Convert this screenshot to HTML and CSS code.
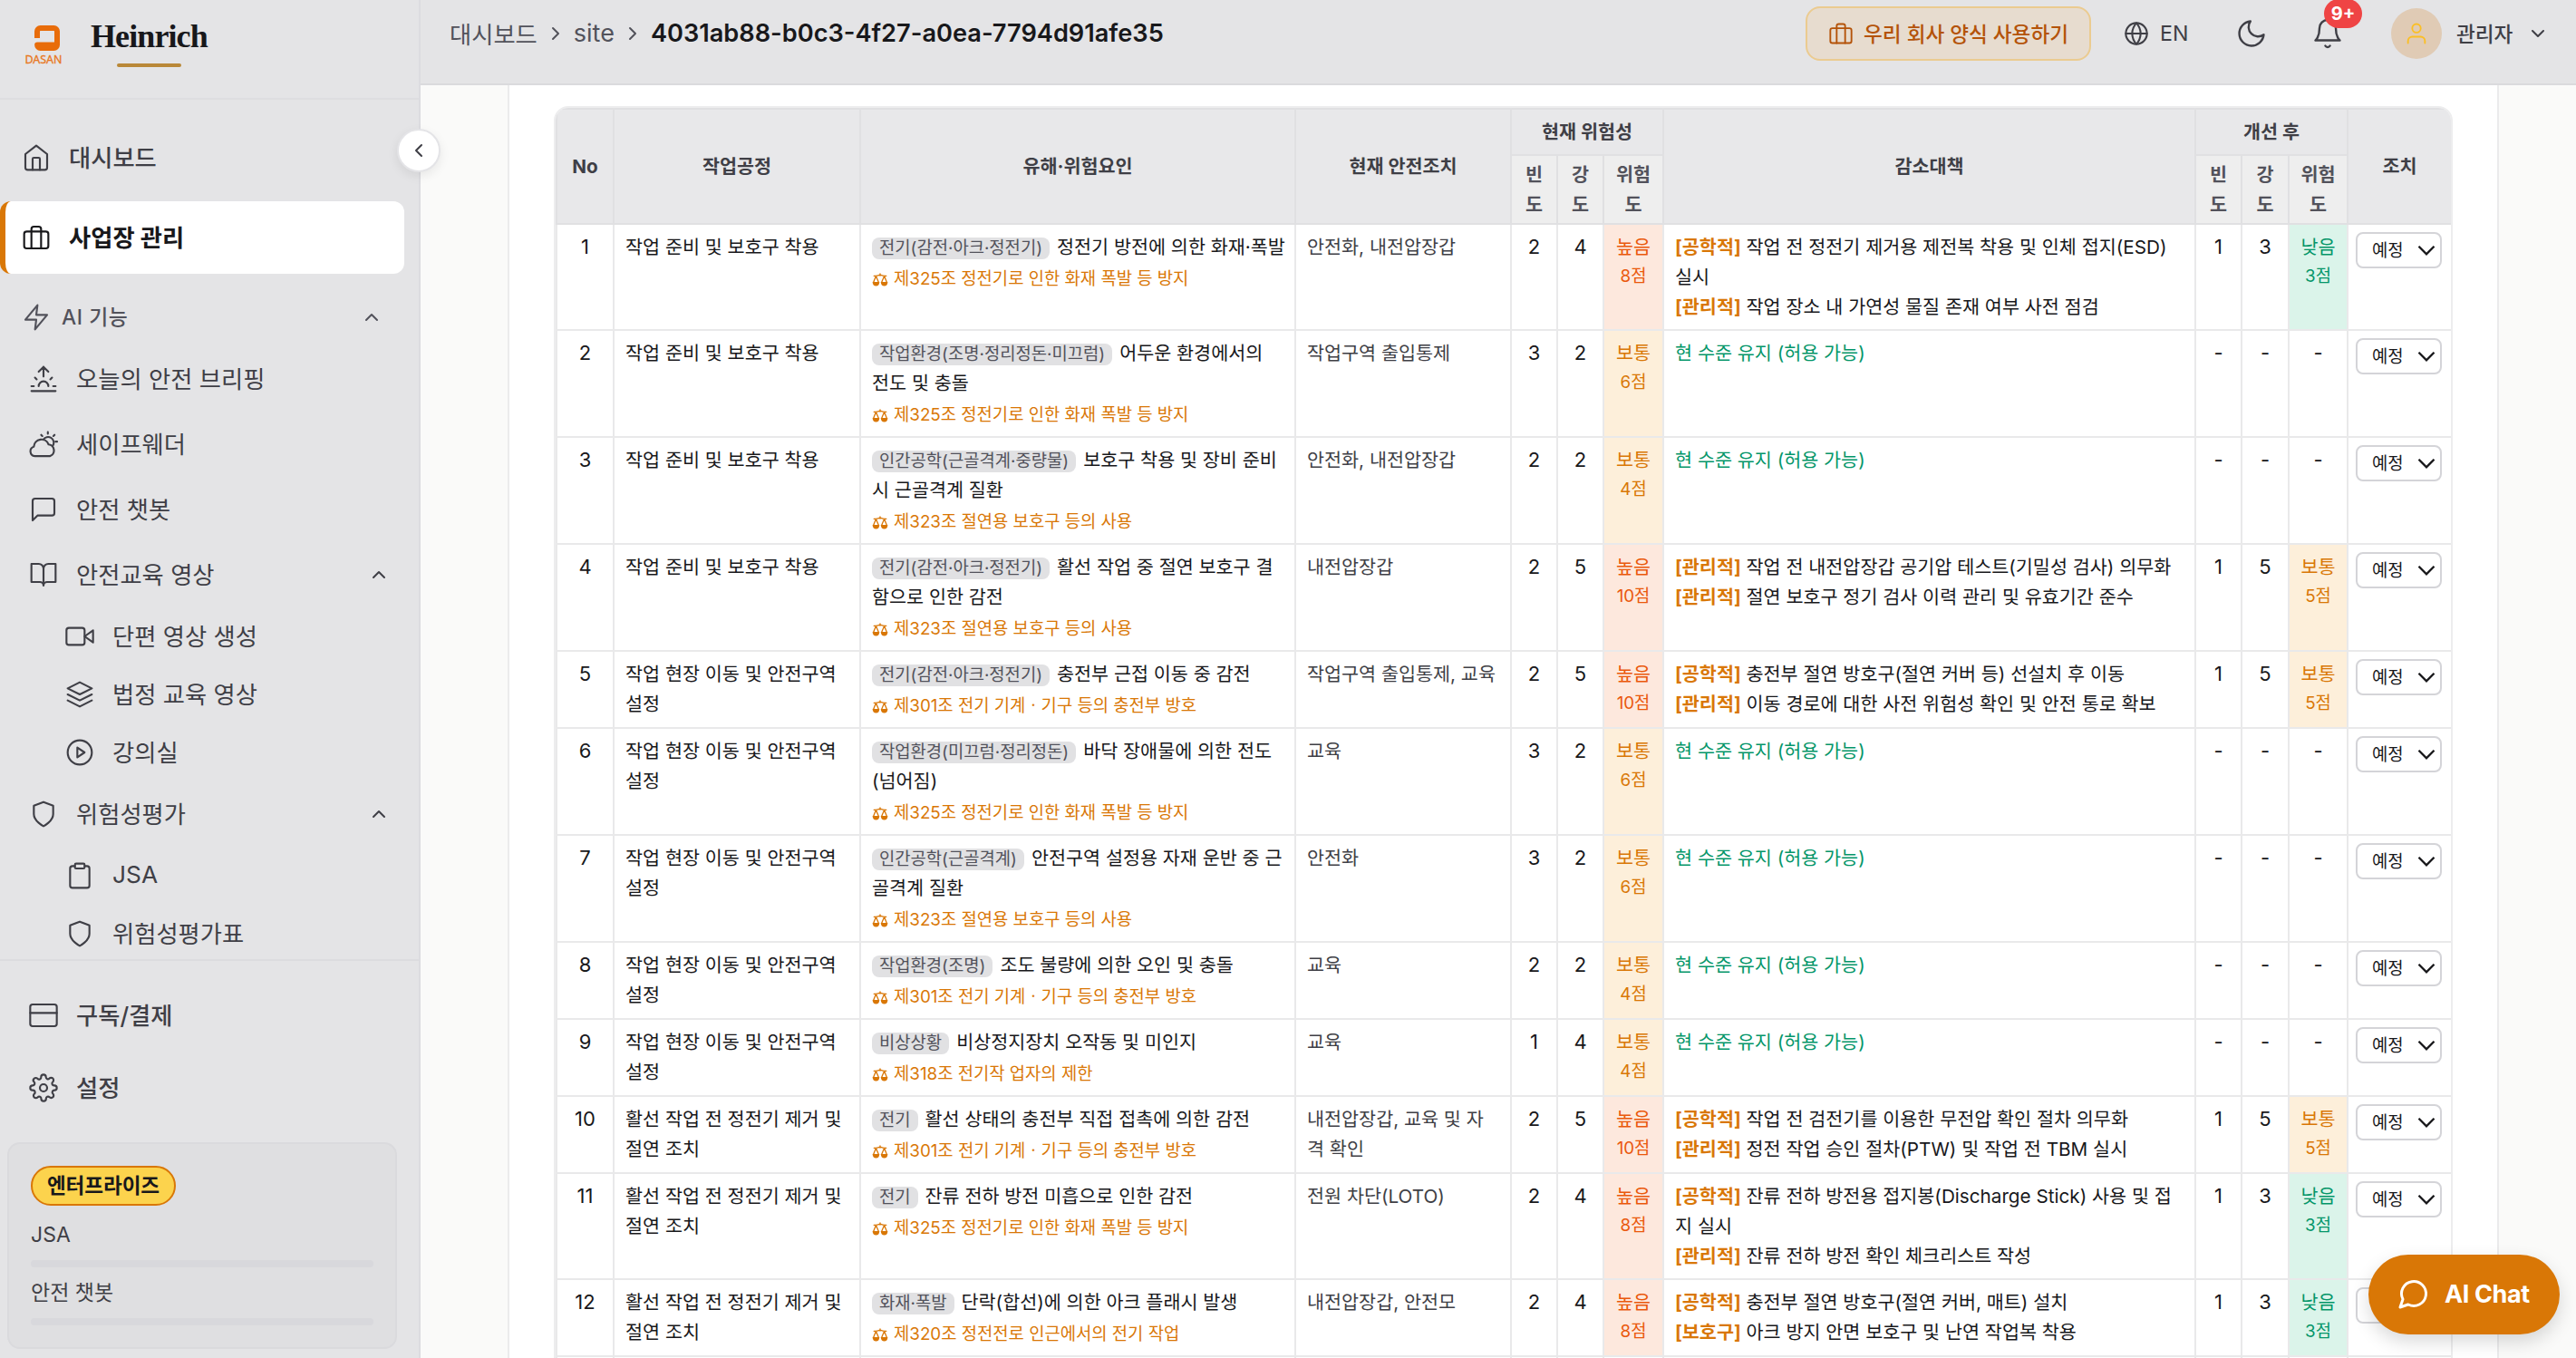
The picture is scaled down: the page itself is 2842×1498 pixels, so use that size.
FILE: index.html
```html
<!DOCTYPE html>
<html lang="ko">
<head>
<meta charset="utf-8">
<title>Heinrich</title>
<link rel="stylesheet" href="styles.css">
</head>
<body>
<svg class="sprite" aria-hidden="true">
  <symbol id="home" viewBox="0 0 24 24"><path d="M3 9l9-7 9 7v11a2 2 0 0 1-2 2H5a2 2 0 0 1-2-2z"/><path d="M9 22V13a1 1 0 0 1 1-1h4a1 1 0 0 1 1 1v9"/></symbol>
  <symbol id="case" viewBox="0 0 24 24"><rect x="2" y="7" width="20" height="14" rx="2"/><path d="M16 21V5a2 2 0 0 0-2-2h-4a2 2 0 0 0-2 2v16"/></symbol>
  <symbol id="zap" viewBox="0 0 24 24"><path d="M13 2L3 14h9l-1 8 10-12h-9l1-8z"/></symbol>
  <symbol id="up" viewBox="0 0 24 24"><path d="M18 15l-6-6-6 6"/></symbol>
  <symbol id="down" viewBox="0 0 24 24"><path d="M6 9l6 6 6-6"/></symbol>
  <symbol id="left" viewBox="0 0 24 24"><path d="M15 18l-6-6 6-6"/></symbol>
  <symbol id="right" viewBox="0 0 24 24"><path d="M9 18l6-6-6-6"/></symbol>
  <symbol id="sunrise" viewBox="0 0 24 24"><path d="M12 2v8M4.93 10.93l1.41 1.41M2 18h2M20 18h2M19.07 10.93l-1.41 1.41M22 22H2M8 6l4-4 4 4M16 18a4 4 0 0 0-8 0"/></symbol>
  <symbol id="cloud" viewBox="0 0 24 24"><path d="M15.600 2v1.300M10.100 4.300l.9.900M21.100 4.300l-.9.900M22 9.800h1.300M11.800 8.300a4.600 4.600 0 0 1 8 4.800M4.800 21.800a4 4 0 0 1-.8-7.800A6.300 6.300 0 0 1 16.200 12.200a5 5 0 0 1 1.300 9.600z"/></symbol>
  <symbol id="msg" viewBox="0 0 24 24"><path d="M21 15a2 2 0 0 1-2 2H7l-4 4V5a2 2 0 0 1 2-2h14a2 2 0 0 1 2 2z"/></symbol>
  <symbol id="book" viewBox="0 0 24 24"><path d="M2 3h6a4 4 0 0 1 4 4v14a3 3 0 0 0-3-3H2zM22 3h-6a4 4 0 0 0-4 4v14a3 3 0 0 1 3-3h7z"/></symbol>
  <symbol id="video" viewBox="0 0 24 24"><path d="M23 7l-7 5 7 5V7z"/><rect x="1" y="5" width="15" height="14" rx="2"/></symbol>
  <symbol id="layers" viewBox="0 0 24 24"><path d="M12 2L2 7l10 5 10-5-10-5zM2 17l10 5 10-5M2 12l10 5 10-5"/></symbol>
  <symbol id="play" viewBox="0 0 24 24"><circle cx="12" cy="12" r="10"/><path d="M10 8l6 4-6 4V8z"/></symbol>
  <symbol id="shield" viewBox="0 0 24 24"><path d="M12 22s8-4 8-10V5l-8-3-8 3v7c0 6 8 10 8 10z"/></symbol>
  <symbol id="clip" viewBox="0 0 24 24"><path d="M16 4h2a2 2 0 0 1 2 2v14a2 2 0 0 1-2 2H6a2 2 0 0 1-2-2V6a2 2 0 0 1 2-2h2"/><rect x="8" y="2" width="8" height="4" rx="1"/></symbol>
  <symbol id="card" viewBox="0 0 24 24"><rect x="1" y="3" width="22" height="18" rx="2"/><path d="M1 10h22"/></symbol>
  <symbol id="gear" viewBox="0 0 24 24"><circle cx="12" cy="12" r="3"/><path d="M19.400 15a1.650 1.650 0 0 0 .33 1.820l.06.06a2 2 0 1 1-2.830 2.830l-.06-.06a1.650 1.650 0 0 0-2.800 1.170V21a2 2 0 0 1-4 0v-.09a1.650 1.650 0 0 0-2.900-1.150l-.06.06a2 2 0 1 1-2.830-2.830l.06-.06A1.650 1.650 0 0 0 3.090 14H3a2 2 0 0 1 0-4h.09a1.650 1.650 0 0 0 1.170-2.800l-.06-.06a2 2 0 1 1 2.830-2.830l.06.06A1.650 1.650 0 0 0 10 3.090V3a2 2 0 0 1 4 0v.09a1.650 1.650 0 0 0 2.820 1.170l.06-.06a2 2 0 1 1 2.830 2.830l-.06.06A1.650 1.650 0 0 0 20.910 10H21a2 2 0 0 1 0 4h-.09a1.650 1.650 0 0 0-1.510 1z"/></symbol>
  <symbol id="globe" viewBox="0 0 24 24"><circle cx="12" cy="12" r="10"/><path d="M2 12h20M12 2a15.300 15.300 0 0 1 4 10 15.300 15.300 0 0 1-4 10 15.300 15.300 0 0 1-4-10 15.300 15.300 0 0 1 4-10z"/></symbol>
  <symbol id="moon" viewBox="0 0 24 24"><path d="M21 12.790A9 9 0 1 1 11.210 3 7 7 0 0 0 21 12.790z"/></symbol>
  <symbol id="bell" viewBox="0 0 24 24"><path d="M18 8A6 6 0 0 0 6 8c0 7-3 9-3 9h18s-3-2-3-9M13.730 21a2 2 0 0 1-3.460 0"/></symbol>
  <symbol id="user" viewBox="0 0 24 24"><path d="M20 21v-2a4 4 0 0 0-4-4H8a4 4 0 0 0-4 4v2"/><circle cx="12" cy="7" r="4"/></symbol>
  <symbol id="chat" viewBox="0 0 24 24"><path d="M7.900 20A9 9 0 1 0 4 16.100L2 22Z"/></symbol>
  <symbol id="law" viewBox="0 0 18 16"><path d="M2.200 3.300Q4.500 3.800 9 2.200Q13.500 3.800 15.800 3.300M9 1v2M4.400 3.500L1.600 10.500M4.400 3.500L7.400 10.500M13.600 3.500L10.600 10.500M13.600 3.500L16.400 10.500" fill="none" stroke="currentColor" stroke-width="1.300"/><path d="M.6 10h7.700q-.3 4.500-3.800 4.500T.6 10zM9.700 10h7.700q-.3 4.500-3.800 4.500T9.700 10z" fill="currentColor" stroke="none"/></symbol>
</svg>
<div class="app">
  <aside class="sidebar">
    <div class="brand">
      <div class="logo">
        <svg class="logo-mark" viewBox="0 0 28 28"><path d="M3 14V6.500a3.500 3.500 0 0 1 3.500-3.500h15A3.500 3.500 0 0 1 25 6.500v15a3.500 3.500 0 0 1-3.500 3.500h-15A3.500 3.500 0 0 1 3.100 21.500H22" fill="none" stroke="#e86c0a" stroke-width="6"/></svg>
        <span>DASAN</span>
      </div>
      <div class="name"><b>Heinrich</b><i></i></div>
    </div>
    <nav class="nav">
      <a class="item top"><svg><use href="#home"/></svg>대시보드</a>
      <a class="item top active"><svg><use href="#case"/></svg>사업장 관리</a>
      <a class="item group"><svg><use href="#zap"/></svg>AI 기능<svg class="chev"><use href="#up"/></svg></a>
      <a class="item"><svg><use href="#sunrise"/></svg>오늘의 안전 브리핑</a>
      <a class="item"><svg><use href="#cloud"/></svg>세이프웨더</a>
      <a class="item"><svg><use href="#msg"/></svg>안전 챗봇</a>
      <a class="item"><svg><use href="#book"/></svg>안전교육 영상<svg class="chev"><use href="#up"/></svg></a>
      <a class="item sub"><svg><use href="#video"/></svg>단편 영상 생성</a>
      <a class="item sub"><svg><use href="#layers"/></svg>법정 교육 영상</a>
      <a class="item sub"><svg><use href="#play"/></svg>강의실</a>
      <a class="item"><svg><use href="#shield"/></svg>위험성평가<svg class="chev"><use href="#up"/></svg></a>
      <a class="item sub"><svg><use href="#clip"/></svg>JSA</a>
      <a class="item sub"><svg><use href="#shield"/></svg>위험성평가표</a>
    </nav>
    <div class="foot">
      <a class="item"><svg><use href="#card"/></svg>구독/결제</a>
      <a class="item"><svg><use href="#gear"/></svg>설정</a>
      <div class="plan">
        <span class="plan-badge">엔터프라이즈</span>
        <span class="plan-label">JSA</span><i class="bar"></i>
        <span class="plan-label">안전 챗봇</span><i class="bar"></i>
      </div>
    </div>
    <button class="collapse"><svg><use href="#left"/></svg></button>
  </aside>
  <main class="main">
    <header class="topbar">
      <div class="crumbs"><span>대시보드</span><svg><use href="#right"/></svg><span class="latin">site</span><svg><use href="#right"/></svg><b>4031ab88-b0c3-4f27-a0ea-7794d91afe35</b></div>
      <div class="tools">
        <button class="form-btn"><svg><use href="#case"/></svg>우리 회사 양식 사용하기</button>
        <span class="lang"><svg><use href="#globe"/></svg>EN</span>
        <svg class="moon"><use href="#moon"/></svg>
        <span class="bell"><svg><use href="#bell"/></svg><em>9+</em></span>
        <span class="avatar"><svg><use href="#user"/></svg></span>
        <span class="who">관리자</span>
        <svg class="who-chev"><use href="#down"/></svg>
      </div>
    </header>
    <section class="sheet">
      <div class="table-wrap">
        <table>
          <colgroup><col class="c1"><col class="c2"><col class="c3"><col class="c4"><col class="c5"><col class="c6"><col class="c7"><col class="c8"><col class="c9"><col class="c10"><col class="c11"><col class="c12"></colgroup>
          <thead>
            <tr class="h1"><th rowspan="2">No</th><th rowspan="2">작업공정</th><th rowspan="2">유해·위험요인</th><th rowspan="2">현재 안전조치</th><th colspan="3">현재 위험성</th><th rowspan="2">감소대책</th><th colspan="3">개선 후</th><th rowspan="2">조치</th></tr>
            <tr class="h2"><th>빈도</th><th>강도</th><th>위험도</th><th>빈도</th><th>강도</th><th>위험도</th></tr>
          </thead>
          <tbody>
            <tr class="r3"><td class="n">1</td><td>작업 준비 및 보호구 착용</td><td><span class="tag">전기(감전·아크·정전기)</span>정전기 방전에 의한 화재·폭발<div class="law"><svg><use href="#law"/></svg>제325조 정전기로 인한 화재 폭발 등 방지</div></td><td class="safe">안전화, 내전압장갑</td><td class="n">2</td><td class="n">4</td><td class="risk high">높음<small>8점</small></td><td><b>[공학적]</b> 작업 전 정전기 제거용 제전복 착용 및 인체 접지(ESD)<br>실시<br><b>[관리적]</b> 작업 장소 내 가연성 물질 존재 여부 사전 점검</td><td class="n">1</td><td class="n">3</td><td class="risk low">낮음<small>3점</small></td><td class="act"><span class="select">예정<svg><use href="#down"/></svg></span></td></tr>
            <tr class="r4"><td class="n">2</td><td>작업 준비 및 보호구 착용</td><td><span class="tag">작업환경(조명·정리정돈·미끄럼)</span>어두운 환경에서의<br>전도 및 충돌<div class="law"><svg><use href="#law"/></svg>제325조 정전기로 인한 화재 폭발 등 방지</div></td><td class="safe">작업구역 출입통제</td><td class="n">3</td><td class="n">2</td><td class="risk mid">보통<small>6점</small></td><td class="keep">현 수준 유지 (허용 가능)</td><td class="n">-</td><td class="n">-</td><td class="n">-</td><td class="act"><span class="select">예정<svg><use href="#down"/></svg></span></td></tr>
            <tr class="r4"><td class="n">3</td><td>작업 준비 및 보호구 착용</td><td><span class="tag">인간공학(근골격계·중량물)</span>보호구 착용 및 장비 준비<br>시 근골격계 질환<div class="law"><svg><use href="#law"/></svg>제323조 절연용 보호구 등의 사용</div></td><td class="safe">안전화, 내전압장갑</td><td class="n">2</td><td class="n">2</td><td class="risk mid">보통<small>4점</small></td><td class="keep">현 수준 유지 (허용 가능)</td><td class="n">-</td><td class="n">-</td><td class="n">-</td><td class="act"><span class="select">예정<svg><use href="#down"/></svg></span></td></tr>
            <tr class="r4"><td class="n">4</td><td>작업 준비 및 보호구 착용</td><td><span class="tag">전기(감전·아크·정전기)</span>활선 작업 중 절연 보호구 결<br>함으로 인한 감전<div class="law"><svg><use href="#law"/></svg>제323조 절연용 보호구 등의 사용</div></td><td class="safe">내전압장갑</td><td class="n">2</td><td class="n">5</td><td class="risk high">높음<small>10점</small></td><td><b>[관리적]</b> 작업 전 내전압장갑 공기압 테스트(기밀성 검사) 의무화<br><b>[관리적]</b> 절연 보호구 정기 검사 이력 관리 및 유효기간 준수</td><td class="n">1</td><td class="n">5</td><td class="risk mid">보통<small>5점</small></td><td class="act"><span class="select">예정<svg><use href="#down"/></svg></span></td></tr>
            <tr class="r2"><td class="n">5</td><td>작업 현장 이동 및 안전구역<br>설정</td><td><span class="tag">전기(감전·아크·정전기)</span>충전부 근접 이동 중 감전<div class="law"><svg><use href="#law"/></svg>제301조 전기 기계ㆍ기구 등의 충전부 방호</div></td><td class="safe">작업구역 출입통제, 교육</td><td class="n">2</td><td class="n">5</td><td class="risk high">높음<small>10점</small></td><td><b>[공학적]</b> 충전부 절연 방호구(절연 커버 등) 선설치 후 이동<br><b>[관리적]</b> 이동 경로에 대한 사전 위험성 확인 및 안전 통로 확보</td><td class="n">1</td><td class="n">5</td><td class="risk mid">보통<small>5점</small></td><td class="act"><span class="select">예정<svg><use href="#down"/></svg></span></td></tr>
            <tr class="r4"><td class="n">6</td><td>작업 현장 이동 및 안전구역<br>설정</td><td><span class="tag">작업환경(미끄럼·정리정돈)</span>바닥 장애물에 의한 전도<br>(넘어짐)<div class="law"><svg><use href="#law"/></svg>제325조 정전기로 인한 화재 폭발 등 방지</div></td><td class="safe">교육</td><td class="n">3</td><td class="n">2</td><td class="risk mid">보통<small>6점</small></td><td class="keep">현 수준 유지 (허용 가능)</td><td class="n">-</td><td class="n">-</td><td class="n">-</td><td class="act"><span class="select">예정<svg><use href="#down"/></svg></span></td></tr>
            <tr class="r4"><td class="n">7</td><td>작업 현장 이동 및 안전구역<br>설정</td><td><span class="tag">인간공학(근골격계)</span>안전구역 설정용 자재 운반 중 근<br>골격계 질환<div class="law"><svg><use href="#law"/></svg>제323조 절연용 보호구 등의 사용</div></td><td class="safe">안전화</td><td class="n">3</td><td class="n">2</td><td class="risk mid">보통<small>6점</small></td><td class="keep">현 수준 유지 (허용 가능)</td><td class="n">-</td><td class="n">-</td><td class="n">-</td><td class="act"><span class="select">예정<svg><use href="#down"/></svg></span></td></tr>
            <tr class="r2"><td class="n">8</td><td>작업 현장 이동 및 안전구역<br>설정</td><td><span class="tag">작업환경(조명)</span>조도 불량에 의한 오인 및 충돌<div class="law"><svg><use href="#law"/></svg>제301조 전기 기계ㆍ기구 등의 충전부 방호</div></td><td class="safe">교육</td><td class="n">2</td><td class="n">2</td><td class="risk mid">보통<small>4점</small></td><td class="keep">현 수준 유지 (허용 가능)</td><td class="n">-</td><td class="n">-</td><td class="n">-</td><td class="act"><span class="select">예정<svg><use href="#down"/></svg></span></td></tr>
            <tr class="r2"><td class="n">9</td><td>작업 현장 이동 및 안전구역<br>설정</td><td><span class="tag">비상상황</span>비상정지장치 오작동 및 미인지<div class="law"><svg><use href="#law"/></svg>제318조 전기작 업자의 제한</div></td><td class="safe">교육</td><td class="n">1</td><td class="n">4</td><td class="risk mid">보통<small>4점</small></td><td class="keep">현 수준 유지 (허용 가능)</td><td class="n">-</td><td class="n">-</td><td class="n">-</td><td class="act"><span class="select">예정<svg><use href="#down"/></svg></span></td></tr>
            <tr class="r2"><td class="n">10</td><td>활선 작업 전 정전기 제거 및<br>절연 조치</td><td><span class="tag">전기</span>활선 상태의 충전부 직접 접촉에 의한 감전<div class="law"><svg><use href="#law"/></svg>제301조 전기 기계ㆍ기구 등의 충전부 방호</div></td><td class="safe">내전압장갑, 교육 및 자<br>격 확인</td><td class="n">2</td><td class="n">5</td><td class="risk high">높음<small>10점</small></td><td><b>[공학적]</b> 작업 전 검전기를 이용한 무전압 확인 절차 의무화<br><b>[관리적]</b> 정전 작업 승인 절차(PTW) 및 작업 전 TBM 실시</td><td class="n">1</td><td class="n">5</td><td class="risk mid">보통<small>5점</small></td><td class="act"><span class="select">예정<svg><use href="#down"/></svg></span></td></tr>
            <tr class="r3"><td class="n">11</td><td>활선 작업 전 정전기 제거 및<br>절연 조치</td><td><span class="tag">전기</span>잔류 전하 방전 미흡으로 인한 감전<div class="law"><svg><use href="#law"/></svg>제325조 정전기로 인한 화재 폭발 등 방지</div></td><td class="safe">전원 차단(LOTO)</td><td class="n">2</td><td class="n">4</td><td class="risk high">높음<small>8점</small></td><td><b>[공학적]</b> 잔류 전하 방전용 접지봉(Discharge Stick) 사용 및 접<br>지 실시<br><b>[관리적]</b> 잔류 전하 방전 확인 체크리스트 작성</td><td class="n">1</td><td class="n">3</td><td class="risk low">낮음<small>3점</small></td><td class="act"><span class="select">예정<svg><use href="#down"/></svg></span></td></tr>
            <tr class="r2"><td class="n">12</td><td>활선 작업 전 정전기 제거 및<br>절연 조치</td><td><span class="tag">화재·폭발</span>단락(합선)에 의한 아크 플래시 발생<div class="law"><svg><use href="#law"/></svg>제320조 정전전로 인근에서의 전기 작업</div></td><td class="safe">내전압장갑, 안전모</td><td class="n">2</td><td class="n">4</td><td class="risk high">높음<small>8점</small></td><td><b>[공학적]</b> 충전부 절연 방호구(절연 커버, 매트) 설치<br><b>[보호구]</b> 아크 방지 안면 보호구 및 난연 작업복 착용</td><td class="n">1</td><td class="n">3</td><td class="risk low">낮음<small>3점</small></td><td class="act"><span class="select">예정<svg><use href="#down"/></svg></span></td></tr>
            <tr class="r2"><td></td><td></td><td></td><td></td><td></td><td></td><td></td><td></td><td></td><td></td><td></td><td></td></tr>
          </tbody>
        </table>
      </div>
    </section>
  </main>
  <button class="fab"><svg><use href="#chat"/></svg>AI Chat</button>
</div>
</body>
</html>
```

FILE: styles.css
```css
* { box-sizing: border-box; }
html, body { margin: 0; height: 100%; overflow: hidden; }
body { font-family: Inter, "Noto Sans CJK KR", sans-serif; color: #18181b; background: #fafaf9; }
button { font: inherit; margin: 0; padding: 0; }
svg { fill: none; stroke: currentColor; stroke-width: 1.6; stroke-linecap: round; stroke-linejoin: round; flex: none; }
.sprite { position: absolute; width: 0; height: 0; }
.app { position: relative; display: flex; height: 1498px; overflow: hidden; }

/* Sidebar */
.sidebar { position: relative; z-index: 3; width: 464px; flex: none; display: flex; flex-direction: column; background: #e4e4e6; border-right: 2px solid #dcdce0; }
.brand { height: 110px; flex: none; display: flex; align-items: flex-start; border-bottom: 2px solid #dddde0; padding: 22px 0 0 28px; }
.logo { width: 40px; display: flex; flex-direction: column; align-items: center; color: #e87722; font: 12.5px/14px "Noto Sans", sans-serif; }
.logo span { margin-top: 3px; -webkit-text-stroke: .3px #e87722; }
.logo-mark { width: 28px; height: 28px; margin: 6px 0 0 8px; stroke-linecap: butt; }
.name { margin-left: 32px; display: flex; flex-direction: column; align-items: center; }
.name b { font: bold 36px/36px "Liberation Serif", serif; letter-spacing: -.9px; }
.name i { width: 71px; height: 4px; border-radius: 2px; background: #b98838; margin-top: 12px; }
.nav { flex: none; height: 948px; overflow: hidden; padding-top: 24px; }
.item { display: flex; align-items: center; height: 72px; padding: 0 0 3px 32px; gap: 20px; font-size: 26.3px; color: #3f3f46; white-space: nowrap; }
.item svg { width: 32px; height: 32px; margin-top: 3px; }
.item.top { height: 80px; padding-left: 24px; font-weight: 500; }
.item.active { width: 446px; margin: 8px 0 15px; padding-left: 18px; background: #fff; border-left: 6px solid #d97706; border-radius: 12px; color: #18181b; font-weight: 700; }
.item.group { height: 65px; padding-left: 24px; gap: 12px; font-size: 22.8px; font-weight: 500; color: #52525b; letter-spacing: .6px; }
.item .chev { width: 24px; height: 24px; margin-left: auto; margin-right: 32px; stroke-width: 2; }
.item.group .chev { margin-right: 40px; }
.item.sub { height: 64px; padding-left: 72px; }
.foot { flex: 1; border-top: 2px solid #dcdcdf; padding: 20px 0 0; }
.foot .item { height: 80px; font-weight: 500; }
.plan { width: 430px; height: 228px; margin: 20px 0 0 8px; padding: 24px; border: 2px solid #dadadd; border-radius: 14px; background: #dfdfe1; display: flex; flex-direction: column; }
.plan-badge { width: 160px; height: 44px; border: 2px solid #d97706; border-radius: 22px; background: #fcd34d; font-weight: 700; font-size: 22.6px; line-height: 39px; text-align: center; letter-spacing: -.1px; }
.plan-label { font-size: 23px; line-height: 32px; margin-top: 16px; color: #3f3f46; }
.bar { height: 8px; border-radius: 4px; background: #d8d8dc; margin-top: 12px; }
.bar + .plan-label { margin-top: 12px; }
.collapse { position: absolute; left: 438px; top: 142px; width: 48px; height: 48px; border-radius: 50%; border: 2px solid #e4e4e7; background: #fff; color: #3f3f46; box-shadow: 0 4px 12px rgba(0,0,0,.08); display: grid; place-items: center; }
.collapse svg { width: 24px; height: 24px; stroke-width: 2; }

/* Top bar */
.main { flex: 1; min-width: 0; }
.topbar { height: 94px; display: flex; justify-content: space-between; align-items: flex-start; background: #e4e4e6; border-bottom: 2px solid #dadadd; padding: 7px 31px 0 32px; }
.crumbs, .tools { display: flex; align-items: center; height: 60px; }
.crumbs { font-size: 26.3px; color: #52525b; padding-bottom: 2px; }
.crumbs svg { width: 24px; height: 24px; margin: 2px 8px 0; stroke-width: 2; }
.crumbs .latin { font-size: 27px; }
.crumbs b { font-size: 27.200px; font-weight: 600; color: #18181b; }
.tools { color: #3f3f46; margin-right: -1px; }
.form-btn { width: 315px; height: 60px; padding-bottom: 2px; border: 2px solid #ebcb90; border-radius: 16px; background: #e7dccf; color: #b45309; font-size: 22.6px; font-weight: 500; display: flex; align-items: center; justify-content: center; gap: 11px; white-space: nowrap; }
.form-btn svg { width: 28px; height: 28px; margin-top: 2px; }
.lang { display: flex; align-items: center; gap: 12px; margin-left: 36px; width: 108px; font-size: 23.2px; font-weight: 400; }
.lang svg { width: 28px; height: 28px; stroke-width: 1.8; }
.moon, .bell svg { width: 36px; height: 36px; display: block; }
.moon { margin-left: 15px; }
.bell { position: relative; margin-left: 48px; }
.bell em { position: absolute; left: 14px; top: -20px; width: 42px; height: 32px; border-radius: 16px; background: #ef4444; color: #fff; font: 700 20px/32px Inter, sans-serif; text-align: center; }
.avatar { width: 56px; height: 56px; border-radius: 50%; background: #e0cbb5; color: #fbbf24; display: grid; place-items: center; margin-left: 52px; }
.avatar svg { width: 28px; height: 28px; }
.who { margin: -2px 0 0 16px; width: 64px; font-size: 22.6px; font-weight: 500; white-space: nowrap; }
.who-chev { width: 24px; height: 24px; margin-left: 14px; stroke-width: 2; }

/* Sheet */
.sheet { margin: 0 85px 0 96px; height: 1404px; padding: 23px 49px 0; background: #fff; border: solid #ebebec; border-width: 0 2px; }
.table-wrap { height: 1500px; border: 2px solid #ededee; border-radius: 16px; overflow: hidden; }
table { width: 2091px; table-layout: fixed; border-collapse: collapse; font-size: 20.7px; line-height: 33px; }
.c1 { width: 63px; } .c2 { width: 272px; } .c3 { width: 480px; } .c4 { width: 238px; }
.c5, .c6, .c9 { width: 51px; } .c7 { width: 66px; } .c8 { width: 587px; }
.c10 { width: 52px; } .c11 { width: 65px; } .c12 { width: 115px; }
th, td { border: 2px solid #e9e9ea; padding: 8px 10px 6px 12px; }
th { background: #e8e8ea; border-color: #e0e0e2; color: #3f3f46; font-weight: 700; padding: 0 11px; }
.h1 { height: 51px; }
.h2 { height: 76px; }
.h2 th { background: #eeeeee; color: #52525b; font-weight: 600; }
td { vertical-align: top; text-align: left; white-space: nowrap; }
.r2 { height: 85px; } .r3 { height: 117px; } .r4 { height: 118px; }
td.n { text-align: center; font-size: 22px; padding-left: 0; padding-right: 0; }
.safe { color: #3f3f46; }
.tag { display: inline-block; height: 24px; line-height: 24px; border-radius: 8px; background: #e1e1e3; color: #52525b; font-size: 18.8px; padding: 0 8px; margin-right: 8px; vertical-align: 0; }
.law { display: flex; align-items: center; gap: 6px; height: 30px; margin-top: 4px; font-size: 18.8px; line-height: 30px; color: #d97706; }
.law svg { width: 18px; height: 16px; margin-top: 1px; }
.risk { text-align: center; padding-left: 0; padding-right: 0; }
.risk small { display: block; font-size: 18.8px; line-height: 32px; }
.high { background: #fde8dd; color: #ea580c; }
.mid { background: #fdefda; color: #d97706; }
.low { background: #dbf4ea; color: #059669; }
td b { color: #d97706; }
.keep { color: #059669; }
.act { padding: 8px 8px 6px; }
.select { display: flex; align-items: center; justify-content: space-between; width: 95px; height: 40px; border: 2px solid #d4d4d8; border-radius: 8px; background: #fff; padding: 0 4px 0 16px; font-size: 18.8px; }
.select svg { width: 34px; height: 34px; margin-right: -6px; stroke-width: 1.7; stroke-linecap: butt; stroke-linejoin: miter; }

.fab { position: absolute; z-index: 4; right: 18px; bottom: 26px; width: 211px; height: 88px; border: 0; border-radius: 44px; background: #d97706; color: #fff; font-size: 27px; font-weight: 700; display: flex; align-items: center; gap: 16px; padding: 0 0 2px 32px; letter-spacing: -.4px; white-space: nowrap; box-shadow: 0 8px 20px rgba(0,0,0,.15); }
.fab svg { width: 36px; height: 36px; stroke-width: 2; }
```
